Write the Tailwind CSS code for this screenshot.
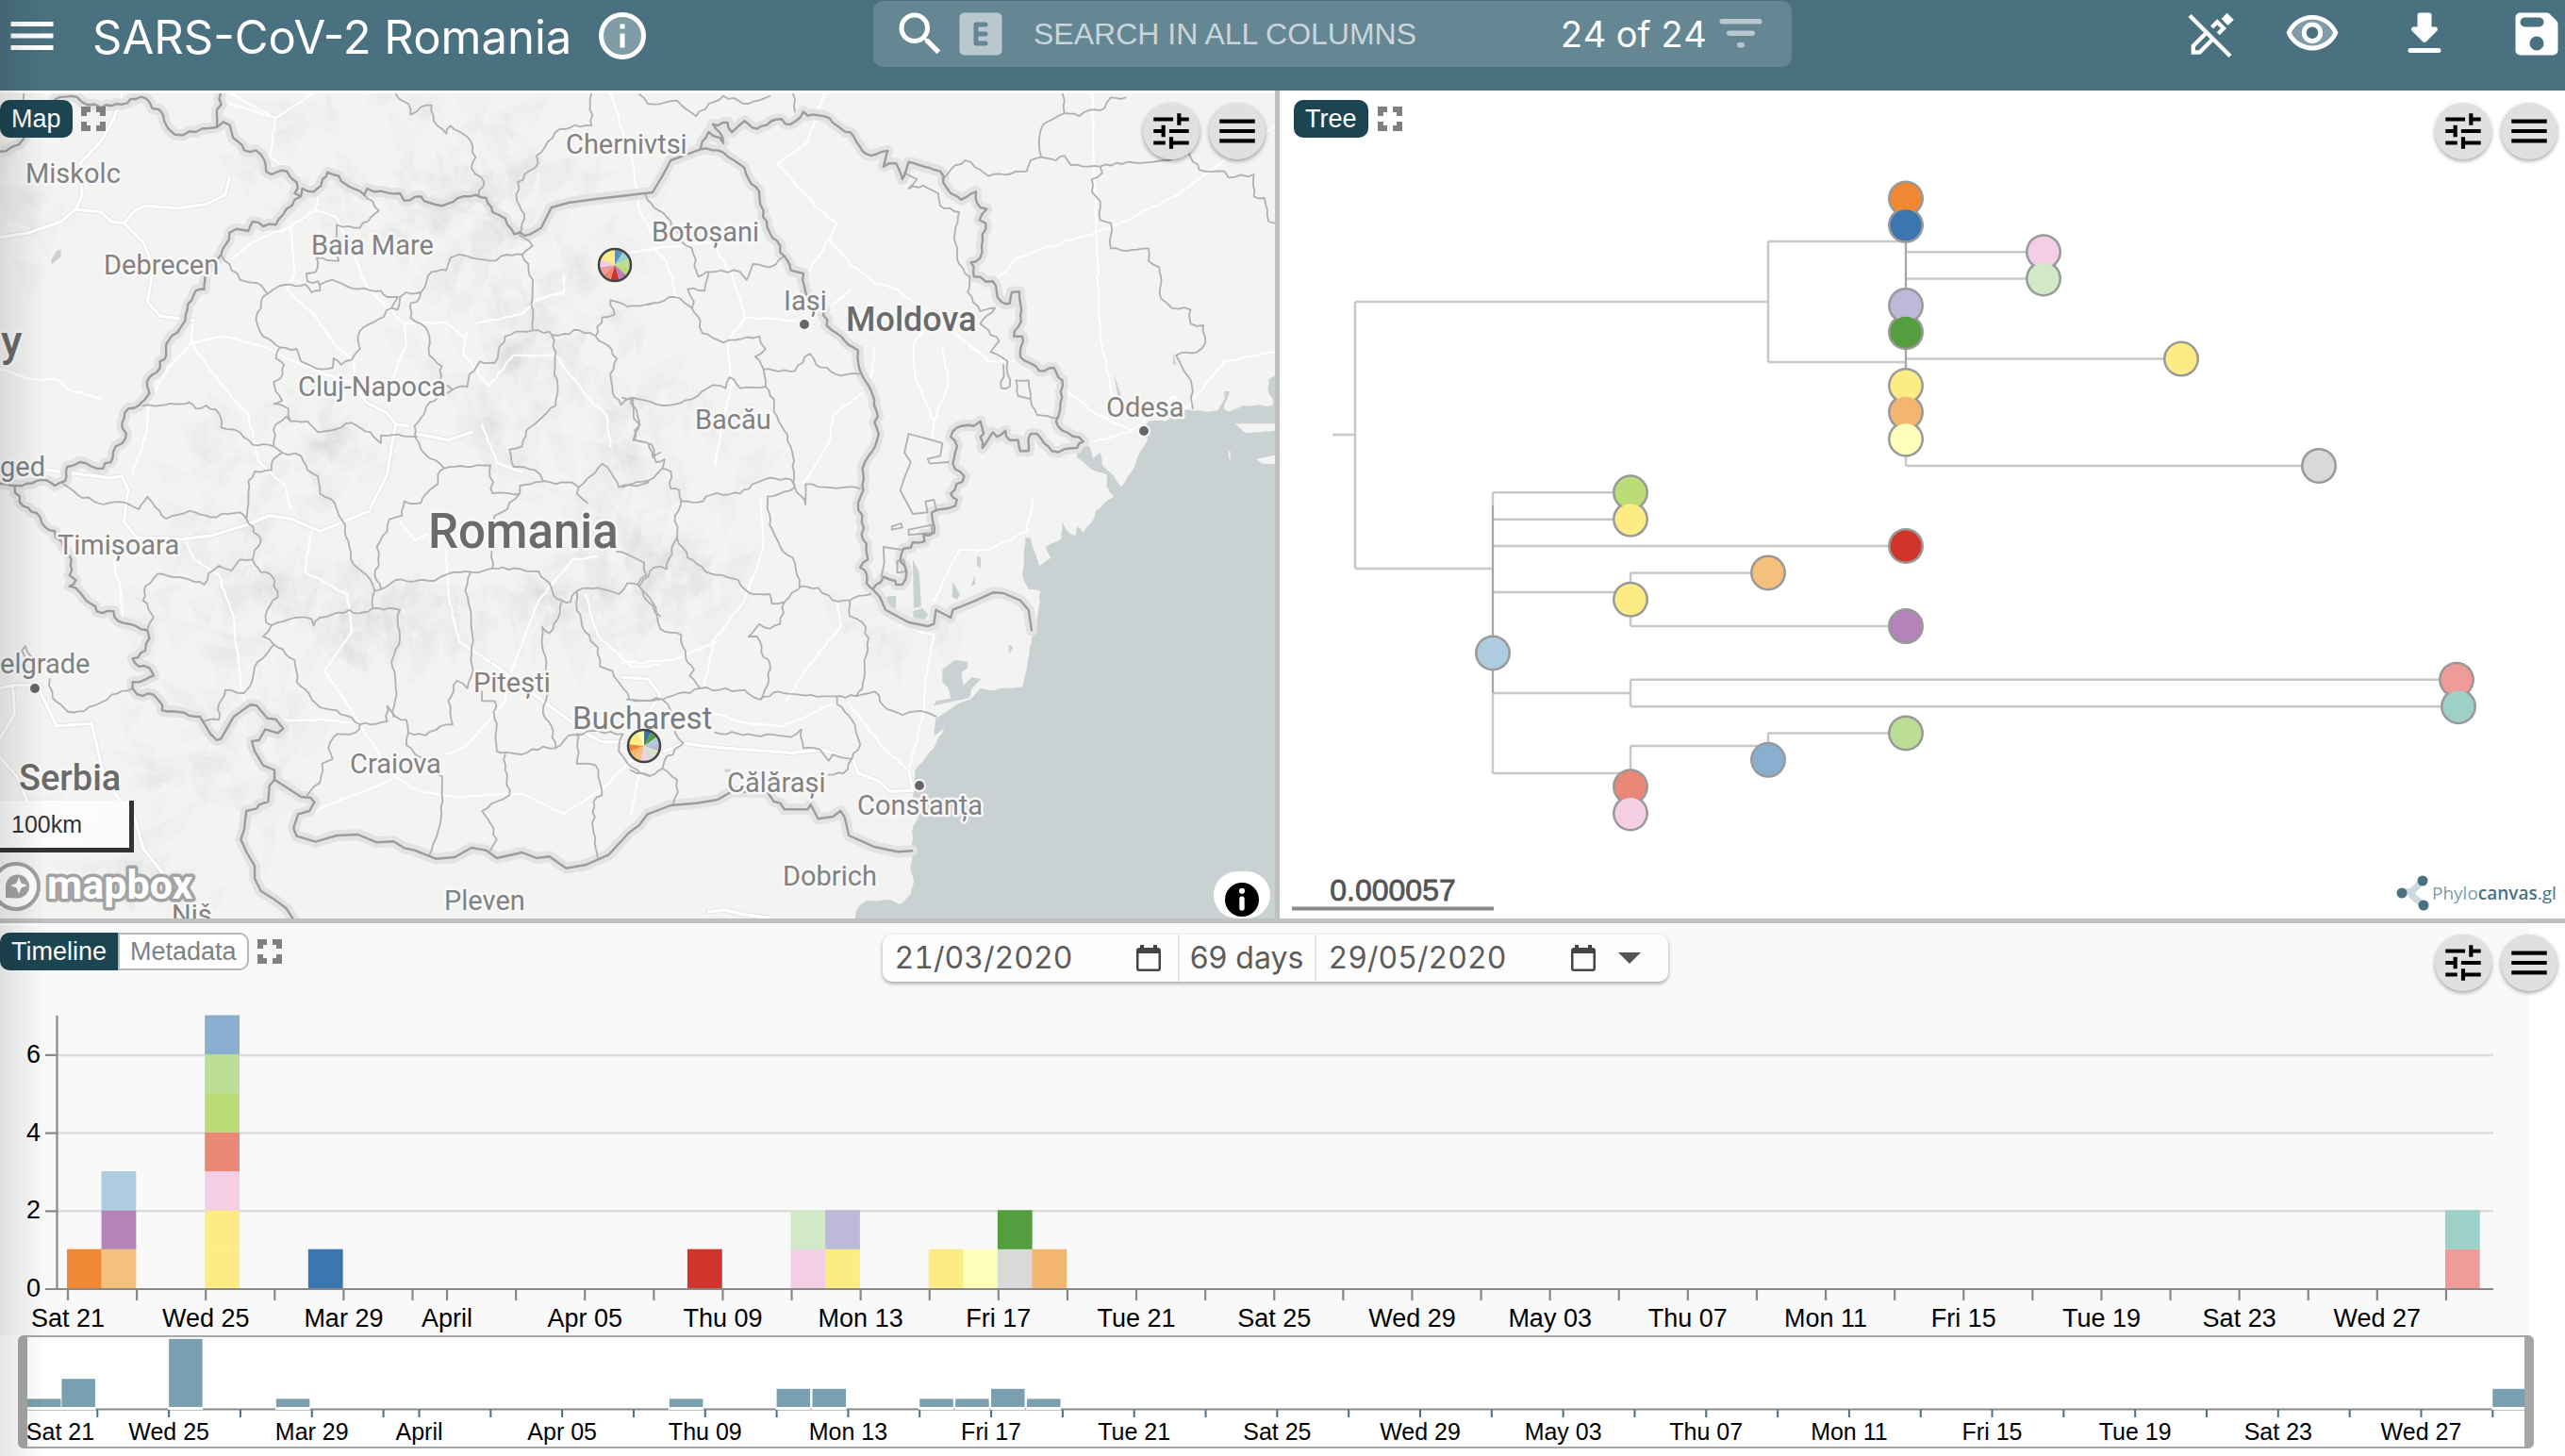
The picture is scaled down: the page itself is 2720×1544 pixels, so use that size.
<!DOCTYPE html>
<html lang="en">
<head>
<meta charset="utf-8">
<title>SARS-CoV-2 Romania</title>
<script src="https://cdn.jsdelivr.net/npm/@tailwindcss/browser@4"></script>
</head>
<body class="relative min-h-screen overflow-x-hidden bg-white font-['Liberation_Sans',Arial,sans-serif] text-[27px]">

<svg class="hidden">
  <symbol id="i-menu" viewBox="0 0 24 24"><path d="M3 18h18v-2H3v2zm0-5h18v-2H3v2zm0-7v2h18V6H3z"/></symbol>
  <symbol id="i-tune" viewBox="0 0 24 24"><path d="M3 17v2h6v-2H3zM3 5v2h10V5H3zm10 16v-2h8v-2h-8v-2h-2v6h2zM7 9v2H3v2h4v2h2V9H7zm14 4v-2H11v2h10zm-6-4h2V7h4V5h-4V3h-2v6z"/></symbol>
  <symbol id="i-expand" viewBox="0 0 26 26"><path d="M3 10V3h7M16 3h7v7M23 16v7h-7M10 23H3v-7" fill="none" stroke="currentColor" stroke-width="6"/></symbol>
  <symbol id="i-cal" viewBox="0 0 26 28"><path d="M4 0h4v3h10V0h4v3h1a3 3 0 0 1 3 3v19a3 3 0 0 1-3 3H3a3 3 0 0 1-3-3V6a3 3 0 0 1 3-3h1zM2.500 9v16.500h21V9z" fill-rule="evenodd"/></symbol>
</svg>

<header class="grid h-24 grid-cols-[926fr_974fr_820fr] items-start bg-[#4a7180] text-white">
  <div class="flex items-center gap-8 pt-1.5 pl-1">
    <button aria-label="Menu" class="size-[60px] shrink-0"><svg class="size-[60px]" fill="currentColor"><use href="#i-menu"/></svg></button>
    <div class="flex items-center gap-6 pl-0.5">
      <h1 class="mt-1 font-[Inter,sans-serif] text-[49px] leading-[60px] whitespace-nowrap">SARS-CoV-2 Romania</h1>
      <button aria-label="About this project" class="size-[60px] shrink-0">
        <svg viewBox="0 0 24 24" class="size-[60px]"><circle cx="12" cy="12" r="9" fill="#fff" fill-opacity=".3" stroke="#fff" stroke-width="2"/><path d="M11 7h2v2h-2zM11 11h2v6h-2z" fill="#fff"/></svg>
      </button>
    </div>
  </div>
  <div class="mt-px flex h-[70px] items-center rounded-[10px] bg-[#658793] pr-6 pl-5">
    <button aria-label="Search" class="size-[60px] shrink-0"><svg viewBox="0 0 24 24" class="size-[60px]" fill="#fff"><path d="M15.500 14h-.79l-.28-.27A6.500 6.500 0 0 0 16 9.500 6.500 6.500 0 1 0 9.500 16c1.610 0 3.090-.59 4.230-1.570l.27.280v.79l5 4.990L20.490 19l-4.990-5zm-6 0a4.500 4.500 0 1 1 0-9 4.500 4.500 0 0 1 0 9z"/></svg></button>
    <button aria-label="Exact match" class="ml-1 size-[60px] shrink-0"><svg viewBox="0 0 24 24" class="size-[60px]" fill="#b9c8cf"><path fill-rule="evenodd" d="M19 3H5a2 2 0 0 0-2 2v14a2 2 0 0 0 2 2h14a2 2 0 0 0 2-2V5a2 2 0 0 0-2-2zm-5 6h-3v2h3a1 1 0 0 1 0 2h-3v2h3a1 1 0 0 1 0 2h-4a1 1 0 0 1-1-1V8a1 1 0 0 1 1-1h4a1 1 0 0 1 0 2z"/></svg></button>
    <input type="text" aria-label="Search in all columns" placeholder="SEARCH IN ALL COLUMNS" class="ml-[26px] min-w-0 flex-1 bg-transparent text-[32px] leading-[40px] text-white outline-none placeholder:text-[#c9d5da]">
    <span class="font-[Inter,sans-serif] text-[38px] leading-[40px] whitespace-nowrap tabular-nums">24 of 24</span>
    <button aria-label="Filter" class="ml-1.5 size-[60px] shrink-0"><svg viewBox="0 0 24 24" class="size-[60px]" stroke="#b9c8cf" stroke-width="2.200" stroke-linecap="round"><path d="M4.100 9.200h15.800M7.100 14.200h9.800M11.500 19.200h1" transform="translate(0 -2.500)"/></svg></button>
  </div>
  <div class="flex items-start justify-end pt-1.5">
    <button aria-label="Stop editing" class="mr-12 size-[60px]"><svg viewBox="0 0 24 24" class="size-[60px]" fill="none" stroke="#fff" stroke-width="1.700"><path d="M3.200 4.200 20.400 21.400" stroke-width="1.800"/><path d="m9.900 11.900-5.200 5.200v2.700h2.700l5.200-5.200M12.600 9.200l2.300-2.300 2.700 2.700-2.300 2.300"/><path d="m16.600 5.600 2.400-2.500 2.900 2.900-2.500 2.400z" fill="#fff" stroke="none"/></svg></button>
    <button aria-label="View" class="mr-[59px] size-[60px]"><svg viewBox="0 0 24 24" class="size-[60px]" fill="#fff"><path fill-opacity=".3" d="M12 6a9.770 9.770 0 0 0-8.820 5.500 9.760 9.760 0 0 0 17.640 0A9.770 9.770 0 0 0 12 6zm0 10a4.500 4.500 0 1 1 0-9 4.500 4.500 0 0 1 0 9z"/><path d="M12 4C7 4 2.730 7.110 1 11.500 2.730 15.890 7 19 12 19s9.270-3.110 11-7.500C21.270 7.110 17 4 12 4zm0 13a9.770 9.770 0 0 1-8.820-5.500 9.760 9.760 0 0 1 17.640 0A9.770 9.770 0 0 1 12 17zm0-10a4.500 4.500 0 1 0 0 9 4.500 4.500 0 0 0 0-9zm0 7a2.500 2.500 0 1 1 0-5 2.500 2.500 0 0 1 0 5z"/></svg></button>
    <button aria-label="Download" class="mr-[59px] size-[60px]"><svg viewBox="0 0 24 24" class="size-[60px]" fill="#fff"><path d="M16.590 9H15V4a1 1 0 0 0-1-1h-4a1 1 0 0 0-1 1v5H7.410c-.89 0-1.340 1.080-.71 1.710l4.590 4.590c.39.39 1.020.39 1.410 0l4.590-4.590c.63-.63.19-1.710-.7-1.710zM5 19a1 1 0 0 0 1 1h12a1 1 0 1 0 0-2H6a1 1 0 0 0-1 1z"/></svg></button>
    <button aria-label="Save" class="size-[60px]"><svg viewBox="0 0 24 24" class="size-[60px]" fill="#fff"><path d="M17.590 3.590A2 2 0 0 0 16.170 3H5a2 2 0 0 0-2 2v14a2 2 0 0 0 2 2h14a2 2 0 0 0 2-2V7.830a2 2 0 0 0-.59-1.410l-2.820-2.830zM12 19a3 3 0 1 1 0-6 3 3 0 0 1 0 6zm1-10H7a2 2 0 0 1 0-4h6a2 2 0 0 1 0 4z"/></svg></button>
  </div>
</header>

<main>
  <div class="grid grid-cols-[1352fr_1363fr] gap-x-[5px] border-b-[5px] border-[#c0c0c0] bg-[#c0c0c0]">
    <section aria-label="Map" class="relative overflow-hidden bg-white pt-[3px]">
      <svg id="map" viewBox="0 99 1352 875" class="block w-full bg-[#f3f3f2]"></svg>
      <div class="absolute inset-0 flex flex-col justify-between">
        <div class="flex items-start justify-between pt-2.5 pr-2.5">
          <div class="flex items-center gap-[9px]">
            <button class="h-10 rounded-[10px] bg-[#1c4552] px-3 leading-10 text-white">Map</button>
            <button aria-label="Expand map" class="size-[26px]"><svg class="size-[26px] text-[#808080]"><use href="#i-expand"/></svg></button>
          </div>
          <div class="flex gap-2.5 pt-[3px]">
            <button aria-label="Map settings" class="grid size-[60px] place-items-center rounded-full bg-[#e0e0e0] shadow-[0_2px_4px_rgba(0,0,0,0.35)]"><svg class="size-[50px]"><use href="#i-tune"/></svg></button>
            <button aria-label="Map menu" class="grid size-[60px] place-items-center rounded-full bg-[#e0e0e0] shadow-[0_2px_4px_rgba(0,0,0,0.35)]"><svg class="size-[50px]"><use href="#i-menu"/></svg></button>
          </div>
        </div>
        <div class="flex items-end justify-between">
          <div class="pb-1.5">
            <div class="h-[55px] w-[142px] border-r-[5px] border-b-[5px] border-[#333] bg-white/75 pl-3 text-[25px] leading-[50px] text-[#333]">100km</div>
            <svg viewBox="0 0 215 64" class="block h-16 w-[215px]" role="img" aria-label="mapbox">
              <circle cx="17" cy="36" r="24" fill="#fff" fill-opacity=".9" stroke="#a0a0a0" stroke-width="4"/>
              <path d="M6 48V36a12.500 12.500 0 1 1 12.500 12.500z" fill="#a3a3a3"/><path d="m20 26 2.500 6.500L29 35l-6.500 2.500L20 44l-2.500-6.500L11 35l6.500-2.500z" fill="#fff"/>
              <text x="50" y="49" font-size="43" stroke="#a3a3a3" stroke-width="7" stroke-linejoin="round" paint-order="stroke" fill="#fff" class="font-[Roboto,sans-serif] font-bold">mapbox</text>
            </svg>
          </div>
          <button aria-label="Map attribution" class="mr-[5px] grid h-[50px] w-[60px] place-items-center rounded-[25px] bg-white pt-2.5"><svg viewBox="0 0 20 20" class="size-9"><circle cx="10" cy="10" r="10"/><circle cx="10" cy="4.900" r="1.700" fill="#fff"/><rect x="8.500" y="8" width="3" height="8.500" rx="1.500" fill="#fff"/></svg></button>
        </div>
      </div>
    </section>

    <section aria-label="Tree" class="relative bg-white">
      <svg id="tree" viewBox="1357 96 1363 878" class="block w-full"></svg>
      <div class="absolute inset-x-0 top-0 flex items-start justify-between pt-2.5 pr-2 pl-[15px]">
        <div class="flex items-center gap-2.5">
          <button class="h-10 rounded-[10px] bg-[#1c4552] px-3 leading-10 text-white">Tree</button>
          <button aria-label="Expand tree" class="size-[26px]"><svg class="size-[26px] text-[#808080]"><use href="#i-expand"/></svg></button>
        </div>
        <div class="flex gap-2.5 pt-[3px]">
          <button aria-label="Tree settings" class="grid size-[60px] place-items-center rounded-full bg-[#e0e0e0] shadow-[0_2px_4px_rgba(0,0,0,0.35)]"><svg class="size-[50px]"><use href="#i-tune"/></svg></button>
          <button aria-label="Tree menu" class="grid size-[60px] place-items-center rounded-full bg-[#e0e0e0] shadow-[0_2px_4px_rgba(0,0,0,0.35)]"><svg class="size-[50px]"><use href="#i-menu"/></svg></button>
        </div>
      </div>
    </section>
  </div>

  <section aria-label="Timeline" class="relative">
    <svg id="timeline" viewBox="0 979 2720 565" class="block w-full"></svg>
    <div class="absolute inset-x-0 top-0 grid grid-cols-[1fr_auto_1fr] items-start pt-2.5 pr-2">
      <div class="flex items-center gap-[9px]">
        <div class="flex">
          <button class="h-10 rounded-l-[10px] bg-[#1c4552] px-3 leading-10 text-white">Timeline</button>
          <button class="h-10 rounded-r-[10px] border-2 border-[#b8b8b8] bg-white px-[11px] leading-9 text-[#808080]">Metadata</button>
        </div>
        <button aria-label="Expand timeline" class="size-[26px]"><svg class="size-[26px] text-[#808080]"><use href="#i-expand"/></svg></button>
      </div>
      <div class="mt-0.5 mr-2 flex h-[50px] items-stretch rounded-[10px] bg-[#fdfdfd] font-[Inter,sans-serif] text-[32px] text-[#5c5c5c] shadow-[0_2px_4px_rgba(0,0,0,0.35)]">
        <div class="flex w-[315px] items-center justify-between border-r-2 border-[#e6e6e6] pr-[18px] pl-[13px]">
          <input type="text" aria-label="Start date" value="21/03/2020" class="w-[220px] bg-transparent tabular-nums outline-none">
          <button aria-label="Choose start date" class="h-7 w-[26px]"><svg class="h-7 w-[26px]" fill="#444"><use href="#i-cal"/></svg></button>
        </div>
        <span class="w-[145px] border-r-2 border-[#e6e6e6] text-center leading-[50px] whitespace-nowrap">69 days</span>
        <div class="flex w-[373px] items-center pl-[13px]">
          <input type="text" aria-label="End date" value="29/05/2020" class="w-[257px] bg-transparent tabular-nums outline-none">
          <button aria-label="Choose end date" class="h-7 w-[26px]"><svg class="h-7 w-[26px]" fill="#444"><use href="#i-cal"/></svg></button>
          <button aria-label="Date presets" class="ml-6 h-3 w-6"><svg viewBox="0 0 24 12" class="h-3 w-6" fill="#555"><path d="M0 0h24L12 12z"/></svg></button>
        </div>
      </div>
      <div class="flex justify-end gap-2.5 pt-0.5">
        <button aria-label="Timeline settings" class="grid size-[60px] place-items-center rounded-full bg-[#e0e0e0] shadow-[0_2px_4px_rgba(0,0,0,0.35)]"><svg class="size-[50px]"><use href="#i-tune"/></svg></button>
        <button aria-label="Timeline menu" class="grid size-[60px] place-items-center rounded-full bg-[#e0e0e0] shadow-[0_2px_4px_rgba(0,0,0,0.35)]"><svg class="size-[50px]"><use href="#i-menu"/></svg></button>
      </div>
    </div>
  </section>
</main>

<div class="pointer-events-none absolute inset-y-0 left-0 w-12 bg-linear-to-r from-black/10 to-transparent"></div>

<script>
const C = { orange:'#ee8833', sand:'#f4c17c', purple:'#b383b9', sky:'#aecde1', yellow:'#fcec83', pink:'#f4cee3', salmon:'#ea8777',
  lime:'#bbdd78', lime2:'#bbdd94', steel:'#8aaecf', blue:'#3b76b0', red:'#cf352b', mint:'#d2e9c8', lilac:'#bdb9d8', cream:'#ffffbb',
  grey:'#d9d9d9', green:'#559e3f', tan:'#f2b670', rose:'#ef9c99', teal:'#9dd1c7' };

/* ---------- Map ---------- */
// Geometry is digitised in four map tiles; each has its own origin and a common x/y unit.
const TILES = { NW:[0,90], NE:[660,90], SW:[0,530], SE:[660,530] };
let seed = 7;
const rnd = () => (seed = (seed * 16807) % 2147483647) / 2147483647;
function points(s) {
  let o = TILES.NW; const out = [];
  for (const t of s.trim().split(/\s+/)) {
    if (TILES[t]) { o = TILES[t]; continue; }
    const [x, y] = t.split(',').map(Number);
    out.push([o[0] + x / 2.24, o[1] + y / 3]);
  }
  return out;
}
function line(s, rough) {
  const p = points(s); let d = 'M' + p[0].map(v => v.toFixed(1));
  for (let i = 1; i < p.length; i++) {
    const [ax, ay] = p[i-1], [bx, by] = p[i], len = Math.hypot(bx-ax, by-ay), n = rough ? Math.max(1, Math.round(len/6)) : 1;
    for (let k = 1; k <= n; k++) {
      const t = k/n, j = k < n ? (rnd()-.5)*2*rough : 0;
      d += 'L' + (ax+(bx-ax)*t - (by-ay)/len*j).toFixed(1) + ',' + (ay+(by-ay)*t + (bx-ax)/len*j).toFixed(1);
    }
  }
  return d;
}
const all = (list, rough) => list.map(s => line(s, rough)).join('');

const countries = [
 'NW 0,212 25,200 45,190 57,170',
 'NW 130,47 182,38 195,55 240,72 290,62 310,45 335,38 355,55 362,75 378,78 390,115 400,140 415,158 435,160 450,148 495,138 515,135 530,118 546,128 550,150 565,180 580,208 608,208 628,240 632,275 645,285 682,275 705,310 700,345 715,355',
 'NW 524,28 515,130',
 'NW 715,355 718,330 745,340 762,322 766,300 778,278 790,285 805,290 820,315 865,350 872,330 905,338 950,345 960,368 1000,355 1020,375 1050,385 1100,355 1130,350 1155,360 1170,405 1200,425 1222,475 1260,475',
 'NW 715,355 700,365 680,395 655,445 625,450 600,435 590,465 562,458 545,470 535,510 525,540 500,570 487,620 485,650 465,655 445,715 440,750 420,790 395,825 395,860 380,880 372,915 355,930 350,960 355,980 345,1000 330,1020 305,1030 295,1060 290,1090 300,1110 290,1140 275,1150 268,1185 245,1220 190,1200 160,1215 155,1260 130,1275 110,1258 75,1268 40,1275 0,1268',
 'SW 35,-40 55,20 95,55 100,75 130,100 150,150 170,190 165,240 180,255 165,275 190,295 215,330 230,355 270,355 280,385 320,400 350,415 355,440 345,480 315,505 330,530 355,535 365,560 345,572 315,580 315,600 325,618 365,620 378,640 385,670 425,675 475,690',
 'NE 185,205 190,180 205,150 240,185 215,125 250,120 260,150 290,115 320,140 365,110 400,125 430,85 440,98 480,100 510,130 550,165 570,210 590,225 630,210 620,260 650,250 665,300 680,245 740,270 755,275 762,310 780,345 805,365 840,340 850,390 865,395 848,430 863,440 850,550 828,565 835,610 880,625 900,690 920,695 925,660 943,658 948,715 940,770 930,800 950,800 945,865 990,910 1025,900 1035,930 1045,940 1040,1030 1030,1070 1045,1100 1095,1135 1080,1155 1020,1165 985,1110 970,1110 965,1165 945,1165 940,1130 920,1130 910,1100 890,1120 880,1105 855,1155 850,1120 858,1110 850,1070 835,1085 795,1090 780,1120 795,1150 785,1205 812,1245 780,1300 SE 795,0 790,20 735,40 740,105 715,110 718,132 690,135 685,152 668,155 660,195 675,230 665,270 650,270 648,258 620,245 595,285',
 'NE 185,205 240,215 265,240 290,265 300,300 325,340 335,400 350,470 385,545 400,590 430,600 435,660 480,715 485,765 520,800 560,845 568,920 590,970 603,1035 605,1130 585,1180 570,1220 572,1290 SE 560,10 570,50 568,110 580,140 583,190 565,215 580,235 580,265 595,285'];
const rivers = [
 'NW 1260,475 1285,455 1310,390 1350,375 1420,362 1470,355 1550,342 NE 95,290 115,240 140,228 185,205',
 'SW 475,690 500,745 515,765 525,760 555,690 595,652 610,655 635,695 655,698 673,728 660,742 630,730 615,765 598,768 605,800 625,845 652,860 652,890',
 'SW 652,890 640,910 637,960 615,970 610,982 585,990 580,1050 572,1080 585,1120 605,1165 605,1205 620,1245 650,1270 680,1300 697,1335',
 'SW 652,890 715,945 738,948 747,962 735,990 708,1000 697,1045 705,1070 750,1088 800,1068 850,1065 895,1090 935,1087 960,1108 985,1115 1035,1142 1080,1137 1120,1107 1155,1115 1180,1140 1240,1122 1275,1140 1305,1135 1345,1172 1390,1162 1445,1130 1480,1080 SE 15,1060 40,1035 60,1000 115,972 175,965 225,955 260,928 345,930 360,960 375,965 385,985 440,985 447,970 465,1015 500,1008 518,990 528,1010 538,1068 600,1105 655,1120 688,1117',
 'SE 595,285 612,310 625,350 680,390 725,402 740,395 745,350 780,375 785,350 840,320 880,295 905,297 945,320 965,350 972,415'];
const counties = [
 'NW 57,28 55,60','NW 940,28 955,50 970,60 975,95 1000,70 1025,65 1030,115 1060,155 1070,130 1110,165 1130,230 1120,265 1150,310 1137,352',
 'NW 1405,28 1405,130 1365,128 1330,140 1275,225 1278,250 1230,310 1228,370 1245,410 1232,475',
 'NW 865,350 885,370 900,400 855,455 800,445 800,480 805,560 752,550 750,595 728,600 730,625 755,625 760,655 740,660 725,635 710,640 690,635 650,650 635,665',
 'NW 525,540 545,570 570,620 610,630 635,665 620,690 620,710 608,745 625,800 665,835 705,840 715,880 740,895 765,905 790,900 792,870 810,890 835,875 855,840 850,800 865,770 900,745 930,710 945,675 920,675 905,655 850,650 790,620 760,635',
 'NW 930,710 945,715 950,675 965,660 1000,660 1025,595 1060,590 1070,550 1090,540 1120,550 1165,560 1205,540 1240,540 1265,512 1235,480',
 'NW 1000,660 990,690 975,695 975,740 1010,770 1020,800 1020,860 1050,895 1045,940 1075,970 1110,960 1115,920 1140,880 1175,885 1200,800 1240,785 1305,785 1310,795 1340,792 1375,780 1415,800 1430,740 1460,730 1450,685 1490,705 1550,695 NE 60,700 125,675 165,710',
 'NW 1240,540 1255,570 1265,640 1262,700 1265,780',
 'NW 1415,800 1445,830 1465,870 1450,920 1455,980 1475,1018 1500,995',
 'NW 1310,795 1320,850 1318,900 1325,960 1320,1020 1290,1055 1250,1100 1240,1150 1210,1160 1220,1215 1270,1225 1290,1260 1320,1270 1360,1265 1375,1280 1430,1205 1450,1230 1470,1280 1540,1265',
 'NW 1295,1260 1260,1270 1235,1275 1235,1300 1170,1300 1165,1210 1120,1215 1055,1220',
 'NW 665,835 655,870 675,890 665,935 650,945 655,975 670,1005 650,1015 685,1030 690,1070 730,1070 755,1105 800,1095 835,1075 880,1105 905,1140 905,1115 945,1112 990,1120',
 'NW 1075,970 1020,1010 1000,1060 985,1085 985,1120 1000,1160 1055,1220 1040,1240 1040,1270 1020,1290 1000,1330 960,1325 955,1370 925,1382',
 'NW 340,1020 380,1020 430,1015 450,1010 465,1030 490,1020 520,1045 525,1090 570,1105 600,1145 650,1150 655,1080 680,1055 690,1070',
 'NW 650,1150 670,1170 650,1190 645,1225 605,1230 590,1260 590,1310 SW 590,15 585,60 620,130 605,160 600,190',
 'NW 670,1170 715,1180 730,1225 755,1245 760,1300 795,1330 SW 800,30 820,80 830,150 840,205 880,255 890,290',
 'NW 150,1270 185,1305 245,1335 300,1330 330,1350 350,1310 SW 370,25 395,60 450,35 500,55 570,40 585,60',
 'NW 1235,1300 1210,1330 SW 1205,30 1175,50 1170,90','NW 1375,1280 1370,1300 1395,1330',
 'NE 1500,995 25,1000'.replace('NE 1500,995 25,1000','NW 1500,995 1505,1060 1520,1080 1505,1125 1540,1140 1550,1185 1568,1170'),
 'SW 350,415 365,375 340,320 345,275 375,235 440,250 485,270 495,235 520,210 550,225 570,190 600,190 620,230 645,240 660,310 635,350 632,390 645,400 700,375 740,380 745,400 760,375 830,350 850,362 885,345 890,290 905,285 940,255 1020,258 1080,230 1120,230 1170,218 1220,218 1280,228 1310,280 1315,305 1335,320 1355,325 1370,290 1420,280 1470,300 1490,265 1515,270 1535,240 1530,200 1500,180 1465,165',
 'SW 905,285 890,240 900,210 895,150 920,100 925,62','SW 645,400 625,435 650,460 605,530 600,570 580,615 535,605 520,650 520,700 485,705',
 'SW 650,460 700,510 705,580 760,660 800,670 855,715 920,705 920,655 940,690 965,700 970,740 1010,750 1060,715 1075,715 1065,640 1085,575 1110,600 1120,560 1120,490 1120,410 1115,340 1105,290 1118,230',
 'SW 885,345 950,350 945,400 950,440 930,515 940,600 935,690','SW 1170,218 1168,165',
 'SW 855,715 845,740 800,745 780,790 790,825 765,840 760,900 730,940','SW 970,740 965,780 1000,820 1050,880 1050,940 1045,1035 1020,1130',
 'SW 1335,320 1325,380 1305,425 1288,405 1290,480 1298,520 1300,620 1290,680 1310,720 1320,790 1290,785 1240,810 1190,805 1180,800 1175,640 1145,640 1145,610',
 'SW 1200,810 1200,860 1210,940 1180,960 1145,990 1165,1030 1180,1080 1165,1115',
 'SW 1370,290 1370,350 1390,420 1420,470 1425,530 1455,545 1480,600 1495,635 1568,635','SW 1515,270 1530,310 1568,370',
 'SW 1320,790 1350,750 1375,750 1370,840 1415,845 1425,900 1430,940 1410,960 1410,1060 1420,1140',
 'SW 1370,745 1420,735 1480,745 1470,800 1500,850 1545,880','SW 315,600 265,620 240,645 200,672 162,675 125,630 118,570','SW 75,500 60,465 52,480 60,505',
 'NE 405,28 410,85','NE 40,30 60,60 130,50 175,100 205,60 240,35 300,60 350,35',
 'NE 1045,28 1050,90 1000,125 990,190 995,230 970,240 960,275 870,290 850,270 815,240 780,270 760,300','NE 1050,90 1085,100 1110,80 1145,75 1160,40 1195,40',
 'NE 995,230 1030,240 1050,225 1065,255 1135,260 1200,245 1300,240 1345,215 1370,270 1430,275 1440,295 1500,285 1500,355 1525,360 1535,435 1550,440',
 'NE 1135,260 1140,280 1115,300 1115,340 1135,370 1135,430 1160,440 1160,520 1210,525 1250,520 1250,560 1275,580 1280,680 1305,710 1350,715 1350,760 1380,765 1385,820 1365,850 1315,860 1330,900 1350,940 1355,1030',
 'NE 670,280 700,300 680,330 715,320 750,345 755,385 800,405 790,470 800,570 825,610 820,660 850,720 885,710 850,760 895,815 875,850 915,880 920,960 900,965 905,890','NE 935,940 965,940 970,1000 940,990 935,940','NE 970,1000 985,1050 1035,1060',
 'NE 55,350 75,390 105,420 150,510 165,520 180,610 200,595 235,590 280,595 295,620 310,570 350,580 385,545',
 'NE 205,600 195,655 155,650 170,690 165,710 185,750 190,790 240,820 325,800 340,840 315,865 335,905 340,960 360,1000 360,1040 385,1100 405,1180 410,1280',
 'NE 335,905 410,910 445,855 460,890 520,925 565,920','NE 340,960 280,965 255,930 245,965 215,955 165,1000 95,1020 40,1000 0,995',
 'NE 25,1000 40,1070 25,1130 70,1145 80,1200 100,1190 95,1220 60,1260 0,1280',
 'NE 95,1220 115,1230 115,1285 135,1290 140,1325 180,1328 210,1305 280,1300 320,1265 350,1250 400,1255 410,1280 435,1335 435,1270 480,1280 565,1285',
 'SE 140,0 125,50 130,120 110,190 105,220 75,215 50,255 40,275','SE 130,120 155,185 210,235 275,255 300,295 350,300 355,330 385,325 425,275 465,280 500,320 540,320 590,300',
 'NE 410,1280 345,1310 SE 350,80 375,150 410,200 420,275',
 'SE 40,275 80,345 90,410 140,430 150,500 170,540 160,560 185,600 230,605 290,605 325,635 350,625 370,610 420,620 505,625 555,625 600,610 620,655 665,685 710,672 745,690',
 'SE 385,325 375,395 350,410 325,395 300,435 320,435 335,500 350,520 345,590 330,635','SE 540,320 540,370 570,390 585,440 575,510 570,600 555,625',
 'SE 185,600 95,635 10,635','SE 95,635 115,670 125,740 145,775 100,830 95,855 65,878 20,860','SE 95,855 130,890 132,930 120,970',
 'SE 220,740 300,745 400,755 425,730 430,790 470,795 490,830 500,810 545,825 565,780 545,700 510,650 510,625','SE 545,825 525,870 490,875'];
const enclaves = ['NE 775,1200 730,1205 725,1190 755,1180 760,1140 735,1130 680,1110 670,1170 685,1200 670,1250 660,1290 680,1340 SE 690,45 725,40 720,5 740,0 745,30','SE 668,160 620,150 622,200 615,245','SE 680,95 735,80 735,105 680,112 680,95','SE 640,85 662,75 665,88 640,95 640,85','SE 653,195 668,190 675,228 653,232 653,195'];
const roads = [
 'NW 0,485 70,470 145,435 180,395 240,405 265,435 295,440 340,500 365,580 350,690 380,735 460,750','NW 295,440 320,400 345,385 420,392 490,380 535,350 545,295',
 'NW 180,395 195,350 190,250 240,180 270,110 290,28','NW 840,950 870,1010 920,1045 940,1080 930,1150 920,1240 880,1345','NW 110,1225 260,1250 290,1245 305,1290 300,1320 SW 295,70 325,120 430,125 500,115 585,80 640,50 690,60 760,100 880,35',
 'NW 940,1080 970,1085','NW 990,1110 1065,1130 1120,1105','SW 0,600 30,590 95,590','SW 95,610 135,720 218,712 250,900 320,1010 340,1110 400,1210','SW 0,820 40,880 65,960','SW 30,590 35,680 0,760','SW 1170,520 1310,660 1400,750 1430,770 1480,770',
 'SE 100,800 145,775 240,790 400,805 475,795 550,830 560,870 610,895 635,928 690,925','SE 680,860 690,925','SE 50,700 90,620 60,570 0,565','SE 205,1310 245,1305 290,1320 350,1330'];
const lanes = [
 'NW 460,750 455,820 400,900 365,980 350,1040 350,1100 315,1235','NW 455,820 530,800 620,830 700,880 770,920 840,950','NW 455,820 480,870 530,960 590,1050 615,1200 680,1280 690,1345','NW 545,28 655,105 745,28','NW 655,105 545,60','NW 655,105 640,230 690,270',
 'NW 555,550 600,500 690,450 750,400 755,360','NW 750,400 800,420 870,640 960,760 965,820 930,950','NW 690,450 700,600 680,650 745,730 800,830 840,880 845,940','NW 1320,860 1220,860 1160,960 1100,850 1110,790','NW 1320,860 1400,1000 1440,1050 1450,1150','NW 1145,1080 1180,1200 1240,1230','NW 0,905 70,935 140,940 165,970 240,998','NW 1450,28 1500,230 1520,400 1550,470','NW 960,760 1060,755 1100,800','NW 1130,760 1240,730 1280,680 1340,660 1340,610',
 'SW 440,125 460,190 520,240 555,380 570,560 580,635','SW 270,190 285,280 290,390','SW 740,100 725,230 825,300 835,420 770,545 800,600 855,715 935,880 1000,930 1080,945 1240,935 1340,1000 1430,920 1500,830','SW 675,700 770,700 855,715','SW 750,990 930,890','SW 1060,160 1065,300 1090,450 1170,520','SW 1060,810 1110,780 1200,640 1220,530 1250,420 1280,320 1360,190 1420,180','SW 1390,300 1420,430 1500,530 1568,525','SW 950,70 985,130 1015,110',
 'SE 390,640 430,550 520,400 510,330','SE 540,650 620,790 680,860 715,680 720,570 740,430 660,400','SE 195,600 215,450 290,320 335,150 330,0','SE 0,520 120,510 225,450','SE 45,850 20,1000','SE 220,680 310,715 380,720 500,650','SE 740,320 800,160 870,160 960,100 975,0',
 'NE 480,30 440,180 370,250 460,390 510,440 490,490 550,580 600,630 650,650 740,740 800,800 870,880 930,880','NE 490,490 440,600','NE 740,740 690,830 695,930 740,1070 735,1130','NE 740,1070 775,950 760,840','NE 1115,28 1125,450 1135,800 1165,1000','NE 890,620 940,550 1000,520 1150,460 1320,350 1430,240 1550,130','NE 1060,980 1130,1050 1210,1100 1120,1135','NE 1210,1100 1310,990 1340,1030 1430,880 1550,850','NE 75,520 105,560 130,680','NE 0,540 75,520 210,500 260,600 290,740 250,820 260,950 240,1080 220,1210','NE 290,740 410,750','NE 570,980 500,1050 490,1140 430,1270','NE 540,655 500,700','NE 600,830 590,930'];
const sea = 'NE 1552,925 1535,935 1535,980 1545,1000 1545,1020 1500,1020 1475,1020 1440,1040 1428,1030 1442,975 1430,975 1430,1000 1415,1035 1385,1040 1340,1032 1290,1070 1250,1070 1240,1090 1248,1130 1225,1180 1210,1230 1185,1278 1165,1240 1140,1210 1135,1170 1118,1190 1110,1150 1095,1145 1080,1160 1080,1185 1125,1230 1150,1240 1150,1275 1168,1310 SE 1155,0 1125,35 1120,60 1095,105 1080,85 1075,115 1060,105 1045,70 1042,125 1005,150 1018,185 990,210 970,122 957,120 950,240 965,285 993,290 985,400 972,440 962,520 950,595 870,605 850,600 825,635 790,655 745,695 740,750 765,725 740,790 715,830 695,860 690,950 705,1000 690,1040 685,1180 692,1210 685,1255 658,1288 635,1272 580,1275 560,1295 550,1340 1552,1340';
const lakes = ['SE 690,190 705,230 710,340 692,345','SE 690,355 712,345 727,365 712,388 692,378','SE 620,310 650,305 650,345 630,340','SE 843,178 852,185 850,220 842,210','SE 785,260 802,300 795,318 783,310','SE 838,240 838,270 828,275','SE 760,540 790,510 820,515 820,535 805,550 810,590 830,565 852,570 830,600 825,630 740,655 745,640 780,632 775,600 760,580','SE 918,460 928,470 918,490','NE 1168,920 1185,990 1177,990','NE 1308,850 1315,890 1308,890','NW 145,525 145,545 122,572 122,555 135,528','SE 243,858 258,856 255,866 244,866'];
const islands = ['NE 1455,1078 1552,1078 1552,1100 1510,1105 1480,1108','NE 1505,1190 1552,1178 1552,1207 1520,1205','NE 1440,1165 1444,1165 1444,1190 1440,1190'];

// Hill shading: faint overlapping facets scattered round the mountain ranges.
let hills = '';
for (const [cx, cy, rx, ry, n] of [[420,170,170,90,60],[560,250,130,90,60],[520,360,100,80,26],[600,420,110,120,50],[700,520,90,130,60],[660,620,110,60,50],[500,650,150,40,60],[340,650,120,60,50],[230,600,80,120,40],[290,480,100,70,40],[230,780,110,60,24],[90,900,110,60,24],[30,200,60,90,14],[210,860,90,100,20],[940,660,60,40,12]])
  for (let i = 0; i < n; i++) {
    const a = rnd()*6.28, r = Math.sqrt(rnd()), x = cx+Math.cos(a)*r*rx, y = cy+Math.sin(a)*r*ry, w = 14+rnd()*38, h = 10+rnd()*34, s = rnd() < .5 ? 1 : -1;
    hills += `<path d="M${x.toFixed()},${y.toFixed()}l${(s*w).toFixed()},${(-h*rnd()).toFixed()}l${(-s*w*.3).toFixed()},${h.toFixed()}l${(-s*w*rnd()).toFixed()},${(h*.5).toFixed()}z"/>`;
  }

const cities = [['Miskolc',27,194],['Debrecen',110,291],['Baia Mare',330,270],['Cluj-Napoca',316,420],['ged',0,505],['Chernivtsi',600,163],['Botoșani',691,256],['Iași',831,329],['Odesa',1173,442],['Bacău',737,455],['Timișoara',61,588],['elgrade',0,714],['Pitești',502,734],['Craiova',371,820],['Pleven',471,965],['Niš',182,980],['Călărași',771,840],['Constanța',909,864],['Dobrich',830,939]];
const big = [['Bucharest',607,773,33,400,'#7c7c7c'],['Moldova',897,351,36,500,'#6b6b6b'],['Serbia',20,838,38,500,'#6b6b6b'],['Romania',454,581,51,500,'#6b6b6b'],['y',1,378,46,500,'#6b6b6b']];
const label = (t,x,y,s,w,f) => `<text x="${x}" y="${y}" font-size="${s}" font-weight="${w}" fill="${f}">${t}</text>`;
function pie(cx, cy, cols) {
  const r = 17, n = cols.length;
  const at = k => { const a = k/n*2*Math.PI; return (cx+r*Math.sin(a)).toFixed(2)+','+(cy-r*Math.cos(a)).toFixed(2); };
  return cols.map((c,i) => `<path d="M${cx},${cy}L${at(i)}A${r},${r} 0 0 1 ${at(i+1)}z" fill="${c}"/>`).join('') + `<circle cx="${cx}" cy="${cy}" r="${r}" fill="none" stroke="#444" stroke-width="2.500"/>`;
}
const edge = all(countries, 2.2) + all(rivers, 0), inner = all(counties, 1.8) + all(enclaves, 0);
document.getElementById('map').innerHTML = `
 <g fill="#000" opacity=".9" fill-opacity=".012">${hills}</g>
 <path d="${line(sea,1)}z${lakes.map(s => line(s,0)+'z').join('')}" fill="#cad1d3"/>
 <path d="${islands.map(s => line(s,0)+'z').join('')}" fill="#f3f3f2"/>
 <g fill="none" stroke-linejoin="round" stroke-linecap="round">
 <path d="${all(lanes,1)}" stroke="#fff" stroke-width="2"/>
 <path d="${all(roads,0)}" stroke="#dedede" stroke-width="5"/><path d="${all(roads,0)}" stroke="#fff" stroke-width="3.500"/>
 <path d="${edge}" stroke="#e3e3e3" stroke-width="12"/>
 <path d="${inner}" stroke="#b0b0b0" stroke-width="1.800"/><path d="${edge}" stroke="#9c9c9c" stroke-width="2.400"/></g>
 <g font-family="Roboto, sans-serif" stroke="#f8f8f8" stroke-width="5" stroke-linejoin="round" paint-order="stroke">
 ${cities.map(([t,x,y]) => label(t,x,y,29,400,'#828282')).join('')}${big.map(b => label(...b)).join('')}
 ${[[853,344],[1213,457],[37,730],[975,833]].map(([x,y]) => `<circle cx="${x}" cy="${y}" r="5" fill="#666" stroke-width="4"/>`).join('')}</g>
 ${pie(652,281,['#5b93c0',C.teal,C.lime2,C.lime,C.purple,C.red,C.salmon,C.rose,C.pink,C.yellow,C.yellow])}
 ${pie(683,791,[C.blue,C.green,C.sky,C.lilac,C.mint,C.grey,C.pink,C.sand,C.tan,C.orange,C.yellow,C.yellow,C.cream])}`;

/* ---------- Tree ---------- */
const col = k => 1437 + 146*k, row = i => 210.5 + 28.350*i;
const leaves = [[4,'orange'],[4,'blue'],[5,'pink'],[5,'mint'],[4,'lilac'],[4,'green'],[6,'yellow'],[4,'yellow'],[4,'tan'],[4,'cream'],[7,'grey'],[2,'lime'],[2,'yellow'],[4,'red'],[3,'sand'],[2,'yellow'],[4,'purple'],[1,'sky'],[8,'rose'],[8,'teal'],[4,'lime2'],[3,'steel'],[2,'salmon'],[2,'pink']];
const H = (y,a,b) => `M${col(a)},${y}H${col(b)}`, V = (k,a,b) => `M${col(k)},${a}V${b}`;
const branches = `M1413,461H1437` + V(0,320,603) + H(320,0,3) + V(3,256,384) + H(256,3,4) + H(384,3,4) + V(4,210,494)
 + [[2,4,5],[3,4,5],[6,4,6],[10,4,7],[11,1,2],[12,1,2],[13,1,4],[14,2,3],[16,2,4],[18,2,8],[19,2,8],[20,3,4]].map(([i,a,b]) => H(row(i),a,b)).join('')
 + H(603,0,1) + V(1,522,820) + H(628,1,2) + V(2,607,664) + H(735,1,2) + V(2,721,749) + H(820,1,2) + V(2,791,848) + H(791,2,3) + V(3,777,806);
document.getElementById('tree').innerHTML = `
 <path d="${branches}" fill="none" stroke="#c8c8c8" stroke-width="2.500"/><path d="${V(4,256,320)+V(4,370,392)+V(1,536,735)}" stroke="#9a9a9a" stroke-width="1.500"/>
 ${leaves.map(([k],i) => `<circle cx="${col(k)+(i==19?2:0)}" cy="${row(i)}" r="19" fill="#999"/>`).join('')}
 ${leaves.map(([k,c],i) => `<circle cx="${col(k)+(i==19?2:0)}" cy="${row(i)}" r="16.500" fill="${C[c]}"/>`).join('')}
 <path d="M1370,963.500H1584" stroke="#8a8a8a" stroke-width="4"/>
 <text x="1477" y="955" text-anchor="middle" font-size="32" fill="#555" stroke="#555" stroke-width=".8">0.000057</text>
 <path d="M2547,947L2558,945 2569,934M2558,947V950L2570,960" fill="none" stroke="#ccd9de" stroke-width="7"/>
 <g fill="#4a7180"><circle cx="2547" cy="947" r="5.500"/><circle cx="2569" cy="934" r="5.500"/><circle cx="2570" cy="960" r="5.500"/></g>
 <text x="2579" y="954" font-size="19" font-family="Open Sans, sans-serif" fill="#7f9ca7">Phylo<tspan font-weight="600" fill="#4a7180">canvas</tspan><tspan fill="#4a7180">.gl</tspan></text>`;

/* ---------- Timeline ---------- */
const days = { 0:['orange'], 1:['sand','purple','sky'], 4:['yellow','yellow','pink','salmon','lime','lime2','steel'], 7:['blue'], 18:['red'], 21:['pink','mint'], 22:['yellow','lilac'], 25:['yellow'], 26:['cream'], 27:['grey','green'], 28:['tan'], 69:['rose','teal'] };
const names = { 0:'Sat 21',4:'Wed 25',8:'Mar 29',11:'April',15:'Apr 05',19:'Thu 09',23:'Mon 13',27:'Fri 17',31:'Tue 21',35:'Sat 25',39:'Wed 29',43:'May 03',47:'Thu 07',51:'Mon 11',55:'Fri 15',59:'Tue 19',63:'Sat 23',67:'Wed 27' };
const ticks = [0,2,4,6,8,10]; for (let d = 11; d < 70; d += 2) ticks.push(d);
const X = d => 71 + 36.550*d, x = d => 27.500 + 37.910*d, Y = v => 1367 - 41.350*v;
let out = `<rect x="0" y="982" width="2682" height="434" fill="#f9f9f9"/>`;
for (const v of [2,4,6]) out += `<path d="M61,${Y(v)}H2644" stroke="#dcdcdc" stroke-width="2.500"/>`;
for (const d in days) days[d].forEach((c,i) => out += `<rect x="${X(+d)}" y="${Y(i+1)-1}" width="36.800" height="41.500" fill="${C[c]}"/>`);
out += `<path d="M60.500,1077V1367M48,1367H2644${[2,4,6].map(v => `M48,${Y(v)}H60`).join('')}${ticks.map(d => `M${X(d)+1},1367V1379`).join('')}" stroke="#888" stroke-width="2.200" fill="none"/>`;
for (const v of [0,2,4,6]) out += `<text x="43" y="${Y(v)+8}" text-anchor="end" font-size="27">${v}</text>`;
for (const d in names) out += `<text x="${X(+d)+1}" y="1407" text-anchor="middle" font-size="27">${names[d]}</text>`;
out += `<rect x="20" y="1417" width="2666" height="118" rx="6" fill="#fff" stroke="#a6a6a6" stroke-width="2"/><path d="M29,1494.500H2677" stroke="#888" stroke-width="2"/>`;
for (const d in days) { const h = 10.600*days[d].length - 2, left = Math.max(29, x(+d)); out += `<rect x="${left-1}" y="1492" width="37" height="3" fill="#fff"/><rect x="${left}" y="${1492-h}" width="${Math.min(35.500, 2677-left)}" height="${h}" fill="#7a9fb0"/>`; }
out += `<path d="${ticks.slice(1).map(d => `M${x(d)},1495V1503`).join('')}" stroke="#4a7180" stroke-width="2"/>`;
for (const d in names) out += `<text x="${d == 0 ? 64 : x(+d)}" y="1527" text-anchor="middle" font-size="25">${names[d]}</text>`;
out += `<path d="M29,1416H25a6,6 0 0 0 -6,6V1530a6,6 0 0 0 6,6H29zM2677,1416h4a6,6 0 0 1 6,6V1530a6,6 0 0 1 -6,6h-4z" fill="#a6a6a6"/>`;
document.getElementById('timeline').innerHTML = out;
</script>
</body>
</html>
